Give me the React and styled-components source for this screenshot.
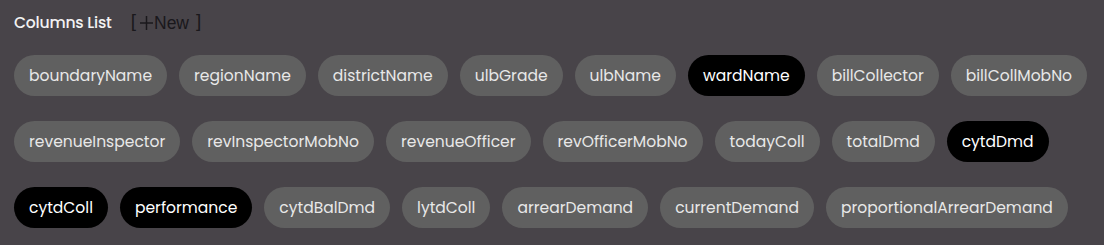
import styled, { createGlobalStyle } from "styled-components";

const GlobalStyle = createGlobalStyle`
    body {
        margin: 0;
        background: #484449;
        font-family: Poppins, "Open Sans", sans-serif;
    }
`;

const columns = [
    { name: 'boundaryName' },
    { name: 'regionName' },
    { name: 'districtName' },
    { name: 'ulbGrade' },
    { name: 'ulbName' },
    { name: 'wardName', active: true },
    { name: 'billCollector' },
    { name: 'billCollMobNo' },
    { name: 'revenueInspector' },
    { name: 'revInspectorMobNo' },
    { name: 'revenueOfficer' },
    { name: 'revOfficerMobNo' },
    { name: 'todayColl' },
    { name: 'totalDmd' },
    { name: 'cytdDmd', active: true },
    { name: 'cytdColl', active: true },
    { name: 'performance', active: true },
    { name: 'cytdBalDmd' },
    { name: 'lytdColl' },
    { name: 'arrearDemand' },
    { name: 'currentDemand' },
    { name: 'proportionalArrearDemand' },
];

function PlusIcon() {
    return (
        <PlusSvg width="13" height="14" viewBox="0 0 13 14">
            <path d="M6.5 0V14M0 7H13" stroke="currentColor" strokeWidth="1.5" fill="none" />
        </PlusSvg>
    );
}

function App() {
    return (
        <Panel>
            <GlobalStyle />
            <Header>
                <Title>Columns List</Title>
                <NewButton>
                    <Bracket>[</Bracket>
                    <PlusIcon />
                    <Label>New</Label>
                    <Bracket $close>]</Bracket>
                </NewButton>
            </Header>
            <ChipList>
                {columns.map((c) => (
                    <Chip key={c.name} $active={c.active}>{c.name}</Chip>
                ))}
            </ChipList>
        </Panel>
    );
}

const Panel = styled.div`
    width: 1104px;
    height: 245px;
    box-sizing: border-box;
    padding: 9px 2px 0 14px;
    background: #484449;
    overflow: hidden;
`;

const Header = styled.div`
    display: flex;
    align-items: center;
    height: 26px;
`;

const Title = styled.div`
    color: #f2f2f2;
    font-size: 15.6px;
    font-weight: 500;
    letter-spacing: -0.2px;
`;

const NewButton = styled.div`
    display: flex;
    align-items: center;
    margin-left: 19px;
    color: #1a181c;
    font-family: "Liberation Sans", Arial, sans-serif;
    cursor: pointer;
`;

const Bracket = styled.span`
    font-size: 19px;
    line-height: 1;
    margin-left: ${(p) => (p.$close ? '7px' : '0')};
    transform: translateY(-2px);
`;

const PlusSvg = styled.svg`
    margin-left: 4px;
    transform: translateY(1px);
`;

const Label = styled.span`
    font-size: 17.5px;
    line-height: 1;
    margin-left: 1px;
    transform: translateY(2px);
`;

const ChipList = styled.div`
    display: flex;
    flex-wrap: wrap;
    column-gap: 12px;
    row-gap: 25px;
    margin-top: 20px;
`;

const Chip = styled.div`
    height: 41px;
    display: flex;
    align-items: center;
    padding: 0 15px;
    border-radius: 21px;
    box-sizing: border-box;
    background: ${(p) => (p.$active ? '#000000' : '#606060')};
    color: ${(p) => (p.$active ? '#ffffff' : '#e8e8e8')};
    font-size: 15.55px;
    white-space: nowrap;
`;

export default App
